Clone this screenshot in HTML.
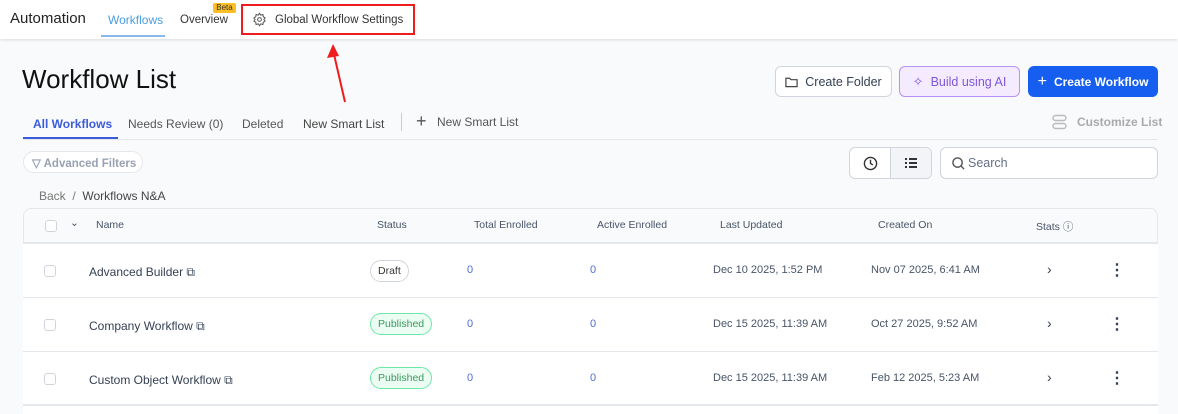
<!DOCTYPE html>
<html><head><style>
*{box-sizing:border-box;margin:0;padding:0}
body{width:1178px;height:414px;overflow:hidden;background:#f9fafb;font-family:"Liberation Sans",sans-serif;position:relative;color:#344054}
.a{position:absolute;white-space:nowrap}
.top{position:absolute;left:0;top:0;width:1178px;height:39px;background:#fff;box-shadow:0 1px 3px rgba(0,0,0,.12)}
.btn{position:absolute;top:66px;height:31px;border-radius:6px;font-size:12.5px;display:flex;align-items:center;justify-content:center;gap:7px}
.row{position:absolute;left:23px;width:1135px;background:#fff;border-top:1px solid #e4e7ec;font-size:12px}
.cb{position:absolute;left:21px;width:12px;height:12px;border:1px solid #d0d5dd;border-radius:3px;background:#fff}
.badge{position:absolute;left:347px;height:22px;border-radius:11px;font-size:10.5px;padding:0 7px;line-height:20px}
.pub{border:1px solid #6ce9a6;background:#ecfdf3;color:#3a9a5e}
.num{position:absolute;color:#4f6bd8;font-size:11px}
.dt{position:absolute;font-size:11px;color:#475467}
.hd{position:absolute;font-size:10.5px;color:#475467;top:10px}
</style></head><body>
<div class="top"></div>
<div class="a" style="left:10px;top:10px;font-size:15px;color:#222">Automation</div>
<div class="a" style="left:108px;top:13px;font-size:12px;color:#4a9de0">Workflows</div>
<div class="a" style="left:101px;top:35px;width:64px;height:2px;background:#8ab8e8"></div>
<div class="a" style="left:180px;top:13px;font-size:11.5px;line-height:14px;color:#333">Overview</div>
<div class="a" style="left:213px;top:3px;width:23px;height:10px;background:#fbbf24;border-radius:2px;font-size:8px;line-height:10px;text-align:center;color:#333">Beta</div>
<div class="a" style="left:241px;top:4px;width:174px;height:31px;border:2px solid #ee1c1c"></div>
<svg class="a" style="left:252px;top:12px" width="15" height="15" viewBox="0 0 24 24" fill="none" stroke="#555" stroke-width="1.6"><circle cx="12" cy="12" r="3"/><path d="M12 2l2 3 3.5-1 .5 3.5 3 2-2 2.5 2 2.5-3 2-.5 3.5-3.5-1-2 3-2-3-3.5 1-.5-3.5-3-2 2-2.5-2-2.5 3-2 .5-3.5 3.5 1z"/></svg>
<div class="a" style="left:275px;top:13px;font-size:11.5px;line-height:14px;color:#333">Global Workflow Settings</div>
<svg class="a" style="left:325px;top:42px" width="30" height="62"><path d="M20 60L8 8" stroke="#ee1c1c" stroke-width="2"/><path d="M8 2L2 16L14 14z" fill="#ee1c1c"/></svg>
<div class="a" style="left:22px;top:64px;font-size:26px;color:#111">Workflow List</div>
<div class="btn" style="left:775px;width:117px;background:#fff;border:1px solid #d0d5dd;color:#344054"><svg width="13" height="12" viewBox="0 0 14 12" fill="none" stroke="#444" stroke-width="1.3"><path d="M1 2h4l1.5 1.5H13v7.5H1z"/></svg>Create Folder</div>
<div class="btn" style="left:899px;width:121px;background:#f4ebff;border:1px solid #b692f6;color:#7f56d9"><span style="font-size:13px">✧</span>Build using AI</div>
<div class="btn" style="left:1028px;width:130px;background:#155eef;color:#fff;font-weight:bold;font-size:12px"><span style="font-size:16px;font-weight:normal">+</span>Create Workflow</div>
<div class="a" style="left:33px;top:117px;font-size:12px;color:#3b5bdb;font-weight:bold">All Workflows</div>
<div class="a" style="left:23px;top:137px;width:95px;height:2px;background:#3b5bdb"></div>
<div class="a" style="left:128px;top:117px;font-size:12px;color:#555">Needs Review (0)</div>
<div class="a" style="left:242px;top:117px;font-size:12px;color:#555">Deleted</div>
<div class="a" style="left:303px;top:117px;font-size:12px;color:#444">New Smart List</div>
<div class="a" style="left:401px;top:113px;width:1px;height:18px;background:#ccc"></div>
<div class="a" style="left:416px;top:111px;font-size:18px;color:#555">+</div>
<div class="a" style="left:437px;top:115px;font-size:12px;color:#555">New Smart List</div>
<svg class="a" style="left:1052px;top:114px" width="15" height="16" viewBox="0 0 15 16" fill="none" stroke="#bbb" stroke-width="1.4"><rect x="1" y="1.5" width="13" height="5" rx="2.5"/><rect x="1" y="9.5" width="13" height="5" rx="2.5"/></svg>
<div class="a" style="left:1077px;top:115px;font-size:12px;color:#aaa;font-weight:bold">Customize List</div>
<div class="a" style="left:23px;top:139px;width:1135px;height:1px;background:#e4e7ec"></div>
<div class="a" style="left:23px;top:151px;width:120px;height:22px;border:1px solid #e4e7ec;border-radius:11px;background:#fff;font-size:11.5px;color:#98a2b3;font-weight:bold;padding:4px 0 0 8px">▽ Advanced Filters</div>
<div class="a" style="left:849px;top:147px;width:83px;height:32px;border:1px solid #d0d5dd;border-radius:6px;background:#fff;overflow:hidden"><div style="position:absolute;left:40px;top:0;width:43px;height:32px;background:#f2f4f7;border-left:1px solid #d0d5dd"></div>
<svg style="position:absolute;left:13px;top:8px" width="15" height="15" viewBox="0 0 16 16" fill="none" stroke="#333" stroke-width="1.5"><circle cx="8" cy="8" r="6.5"/><path d="M8 4v4l2.5 1.5"/></svg>
<svg style="position:absolute;left:54px;top:9px" width="14" height="12" viewBox="0 0 14 12" stroke="#333" stroke-width="2"><path d="M1 2h2M5 2h8M1 6h2M5 6h8M1 10h2M5 10h8"/></svg></div>
<div class="a" style="left:940px;top:147px;width:218px;height:32px;border:1px solid #d0d5dd;border-radius:6px;background:#fff"><svg style="position:absolute;left:11px;top:9px" width="13" height="13" viewBox="0 0 14 14" fill="none" stroke="#555" stroke-width="1.5"><circle cx="6" cy="6" r="5"/><path d="M10 10l3 3"/></svg><span style="position:absolute;left:27px;top:8px;font-size:12.5px;color:#667085">Search</span></div>
<div class="a" style="left:39px;top:189px;font-size:12px;color:#777">Back &nbsp;/&nbsp; <span style="color:#444">Workflows N&amp;A</span></div>
<div class="row" style="top:208px;height:35px;background:#f9fafb;border:1px solid #e4e7ec;border-radius:8px 8px 0 0">
<div class="cb" style="top:11px"></div><div class="hd" style="left:46px;top:8px">⌄</div>
<div class="hd" style="left:72px">Name</div><div class="hd" style="left:353px">Status</div><div class="hd" style="left:450px">Total Enrolled</div><div class="hd" style="left:573px">Active Enrolled</div><div class="hd" style="left:696px">Last Updated</div><div class="hd" style="left:854px">Created On</div><div class="hd" style="left:1012px">Stats ⓘ</div></div>
<div class="row" style="top:243px;height:54px">
<div class="cb" style="top:21px"></div><div class="a" style="left:66px;top:21px">Advanced Builder ⧉</div>
<div class="badge" style="border:1px solid #d0d5dd;background:#fff;color:#333;top:16px">Draft</div>
<div class="num" style="left:444px;top:20px">0</div><div class="num" style="left:567px;top:20px">0</div>
<div class="dt" style="left:690px;top:20px">Dec 10 2025, 1:52 PM</div><div class="dt" style="left:848px;top:20px">Nov 07 2025, 6:41 AM</div>
<div class="a" style="left:1024px;top:17px;font-size:14px">›</div><div class="a" style="left:1086px;top:16px;font-size:16px;font-weight:bold">⋮</div></div>
<div class="row" style="top:297px;height:54px">
<div class="cb" style="top:21px"></div><div class="a" style="left:66px;top:21px">Company Workflow ⧉</div>
<div class="badge pub" style="top:15px">Published</div>
<div class="num" style="left:444px;top:20px">0</div><div class="num" style="left:567px;top:20px">0</div>
<div class="dt" style="left:690px;top:20px">Dec 15 2025, 11:39 AM</div><div class="dt" style="left:848px;top:20px">Oct 27 2025, 9:52 AM</div>
<div class="a" style="left:1024px;top:17px;font-size:14px">›</div><div class="a" style="left:1086px;top:16px;font-size:16px;font-weight:bold">⋮</div></div>
<div class="row" style="top:351px;height:54px">
<div class="cb" style="top:21px"></div><div class="a" style="left:66px;top:21px">Custom Object Workflow ⧉</div>
<div class="badge pub" style="top:15px">Published</div>
<div class="num" style="left:444px;top:20px">0</div><div class="num" style="left:567px;top:20px">0</div>
<div class="dt" style="left:690px;top:20px">Dec 15 2025, 11:39 AM</div><div class="dt" style="left:848px;top:20px">Feb 12 2025, 5:23 AM</div>
<div class="a" style="left:1024px;top:17px;font-size:14px">›</div><div class="a" style="left:1086px;top:16px;font-size:16px;font-weight:bold">⋮</div></div>
<div class="a" style="left:23px;top:404px;width:1135px;height:10px;background:#fff;border-top:2px solid #e4e7ec"></div>
</body></html>
